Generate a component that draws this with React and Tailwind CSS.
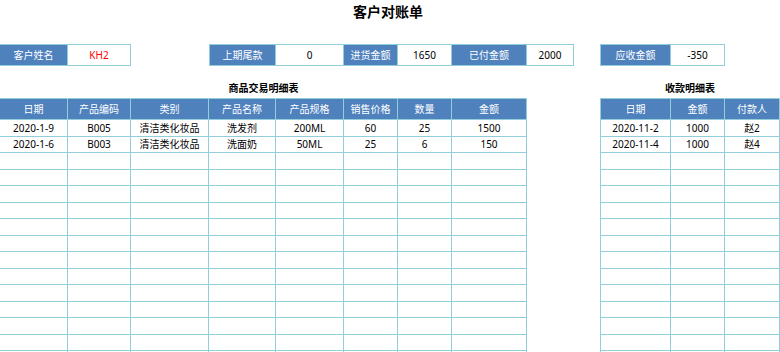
import React from "react";

// sheet columns, same widths for every row so cells line up like a spreadsheet
const GRID =
  "grid grid-cols-[68px_63px_78px_67px_68px_54px_54px_75px_47px_26px_71px_54px_55px]";

const goodsHead = ["日期", "产品编码", "类别", "产品名称", "产品规格", "销售价格", "数量", "金额"];
const payHead = ["日期", "金额", "付款人"];

const goodsRows = [
  ["2020-1-9", "B005", "清洁类化妆品", "洗发剂", "200ML", "60", "25", "1500"],
  ["2020-1-6", "B003", "清洁类化妆品", "洗面奶", "50ML", "25", "6", "150"],
];
const payRows = [
  ["2020-11-2", "1000", "赵2"],
  ["2020-11-4", "1000", "赵4"],
];

const ROWS = 15;

function Label({ children, first }) {
  return (
    <div
      className={`flex items-center justify-center bg-[#4f81bd] text-white border-y border-r border-[#92cddc] ${first ? "border-l" : ""}`}
    >
      {children}
    </div>
  );
}

function Value({ children, red }) {
  return (
    <div
      className={`flex items-center justify-center bg-white border-y border-r border-[#92cddc] ${red ? "text-[#ff0000]" : "text-black"}`}
    >
      {children}
    </div>
  );
}

export default function App() {
  return (
    <div
      className="w-[780px] h-[352px] overflow-hidden bg-white text-[10px] leading-none text-black"
      style={{ fontFamily: '"Noto Sans", "Noto Sans CJK SC", sans-serif' }}
    >
      {/* title */}
      <div className="h-[24px] flex items-center justify-center pr-[4px] text-[14px] font-bold">
        客户对账单
      </div>

      {/* summary row */}
      <div className={`${GRID} h-[22px] mt-[20px]`}>
        <Label>客户姓名</Label>
        <Value red>KH2</Value>
        <div />
        <Label first>上期尾款</Label>
        <Value>0</Value>
        <Label>进货金额</Label>
        <Value>1650</Value>
        <Label>已付金额</Label>
        <Value>2000</Value>
        <div />
        <Label first>应收金额</Label>
        <Value>-350</Value>
        <div />
      </div>

      {/* section captions */}
      <div className={`${GRID} h-[32px] items-end`}>
        <div className="col-span-8 h-[21px] flex items-center justify-center font-bold">
          商品交易明细表
        </div>
        <div className="col-span-2" />
        <div className="col-span-3 h-[21px] flex items-center justify-center font-bold">
          收款明细表
        </div>
      </div>

      {/* table headers */}
      <div className={`${GRID} h-[22px]`}>
        {goodsHead.map((h, i) => (
          <div
            key={i}
            className="flex items-center justify-center bg-[#4f81bd] text-white border-y border-r border-[#92cddc]"
          >
            {h}
          </div>
        ))}
        <div className="col-span-2" />
        {payHead.map((h, i) => (
          <div
            key={i}
            className={`flex items-center justify-center bg-[#4f81bd] text-white border-y border-r border-[#92cddc] ${i === 0 ? "border-l" : ""}`}
          >
            {h}
          </div>
        ))}
      </div>

      {/* body rows */}
      {Array.from({ length: ROWS }).map((_, r) => {
        const g = goodsRows[r] || Array(8).fill("");
        const p = payRows[r] || Array(3).fill("");
        return (
          <div key={r} className={`${GRID} h-[16.5px]`}>
            {g.map((c, i) => (
              <div
                key={i}
                className="flex items-center justify-center border-b border-r border-[#92cddc]"
              >
                {c}
              </div>
            ))}
            <div className="col-span-2" />
            {p.map((c, i) => (
              <div
                key={i}
                className={`flex items-center justify-center border-b border-r border-[#92cddc] ${i === 0 ? "border-l" : ""}`}
              >
                {c}
              </div>
            ))}
          </div>
        );
      })}
    </div>
  );
}
